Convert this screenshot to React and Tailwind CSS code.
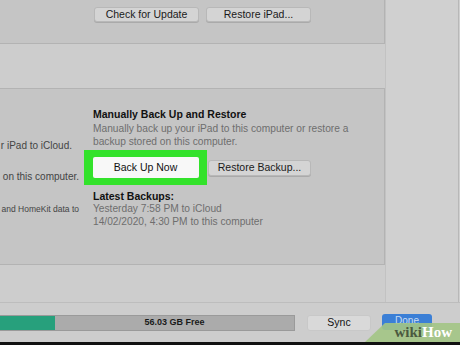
export default function App() {
  const font = { fontFamily: '"Liberation Sans", Arial, sans-serif' };
  return (
    <div className="w-[460px] h-[345px] overflow-hidden bg-[#cdcdcd] flex flex-col relative" style={font}>
      <div className="flex h-[302px]">
        <div className="w-[385px] flex flex-col">
          {/* top panel */}
          <div className="h-[44px] bg-[#c5c5c5] border-b border-r border-[#b3b3b3] flex gap-[7px] pl-[94px] pt-[7px]">
            <div className="w-[105px] h-[15px] bg-[#d4d4d4] rounded-[3px] border border-[#b8b8b8] shadow-[0_1px_0_#aaa] flex items-center justify-center text-[10.5px] text-[#1a1a1a]">Check for Update</div>
            <div className="w-[105px] h-[15px] bg-[#d4d4d4] rounded-[3px] border border-[#b8b8b8] shadow-[0_1px_0_#aaa] flex items-center justify-center text-[10.5px] text-[#1a1a1a]">Restore iPad...</div>
          </div>
          {/* backup panel */}
          <div className="mt-[44px] h-[177px] bg-[#c5c5c5] border-t border-b border-r border-[#b3b3b3] flex">
            <div className="w-[93px] shrink-0 flex flex-col text-[10px] text-[#444]">
              <div className="h-[51px]"></div>
              <div className="flex justify-end pr-[21px] whitespace-nowrap h-[12px] leading-[12px]">r iPad to iCloud.</div>
              <div className="h-[19px]"></div>
              <div className="flex justify-end pr-[14px] whitespace-nowrap h-[12px] leading-[12px]">on this computer.</div>
              <div className="h-[20px]"></div>
              <div className="flex justify-end pr-[14px] whitespace-nowrap h-[12px] leading-[12px] text-[8.5px]">and HomeKit data to</div>
            </div>
            <div className="flex flex-col pt-[19px] whitespace-nowrap">
              <div className="text-[10.5px] font-bold text-[#111] leading-[13px]">Manually Back Up and Restore</div>
              <div className="text-[10.2px] text-[#6e6e6e] leading-[12.5px] mt-[2px]">Manually back up your iPad to this computer or restore a</div>
              <div className="text-[10.2px] text-[#6e6e6e] leading-[12.5px]">backup stored on this computer.</div>
              <div className="flex items-center mt-[2px] ml-[-9px]">
                <div className="w-[123px] h-[35px] bg-[#33e22b] flex items-center justify-center">
                  <div className="w-[106px] h-[21px] bg-[#f8f8f8] rounded-[2px] flex items-center justify-center text-[10.5px] text-[#111]">Back Up Now</div>
                </div>
                <div className="ml-[1px] w-[103px] h-[16px] bg-[#d4d4d4] rounded-[3px] border border-[#b8b8b8] shadow-[0_1px_0_#aaa] flex items-center justify-center text-[10.5px] text-[#1a1a1a]">Restore Backup...</div>
              </div>
              <div className="text-[10.5px] font-bold text-[#111] leading-[13px] mt-[5px]">Latest Backups:</div>
              <div className="text-[10.2px] text-[#6e6e6e] leading-[12.5px]">Yesterday 7:58 PM to iCloud</div>
              <div className="text-[10.2px] text-[#6e6e6e] leading-[12.5px]">14/02/2020, 4:30 PM to this computer</div>
            </div>
          </div>
        </div>
        <div className="flex-1 bg-[#d0d0d0] border-l border-[#c2c2c2] flex justify-end">
          <div className="w-[2px] h-full border-l border-[#b8b8b8]"></div>
        </div>
      </div>
      {/* bottom bar */}
      <div className="h-[40px] border-t border-[#bdbdbd] bg-[#cdcdcd] flex items-start pt-[12px]">
        <div className="w-[295px] h-[16px] flex border border-[#9a9a9a] border-l-0">
          <div className="w-[55px] h-full bg-[#27a07c]"></div>
          <div className="flex-1 h-full bg-[#ababab] flex items-center justify-center text-[9px] font-bold text-[#1a1a1a]">56.03 GB Free</div>
        </div>
        <div className="ml-[12px] w-[64px] h-[16px] bg-[#d9d9d9] rounded-[3px] border border-[#c8c8c8] flex items-center justify-center text-[10.5px] text-[#111]">Sync</div>
        <div className="ml-[11px] mt-[-1px] w-[50px] h-[16px] bg-[#3b7fd6] rounded-[3px] flex items-start pt-[1px] justify-center text-[10px] leading-[12px] text-[#c9dcf3]">Done</div>
      </div>
      <div className="h-[3px] bg-[#111]"></div>
      {/* wikiHow watermark */}
      <div className="absolute right-0 bottom-[3px] w-[95px] h-[19px] bg-[#a3c585]/90 [clip-path:polygon(20px_0,100%_0,100%_100%,0_100%)] flex items-center justify-end pr-[8px]">
        <span className="text-[15px] font-bold leading-none" style={{ fontFamily: '"Liberation Serif", "Times New Roman", serif' }}>
          <span className="text-[#4b5a3f]">wiki</span><span className="text-white">How</span>
        </span>
      </div>
    </div>
  );
}
